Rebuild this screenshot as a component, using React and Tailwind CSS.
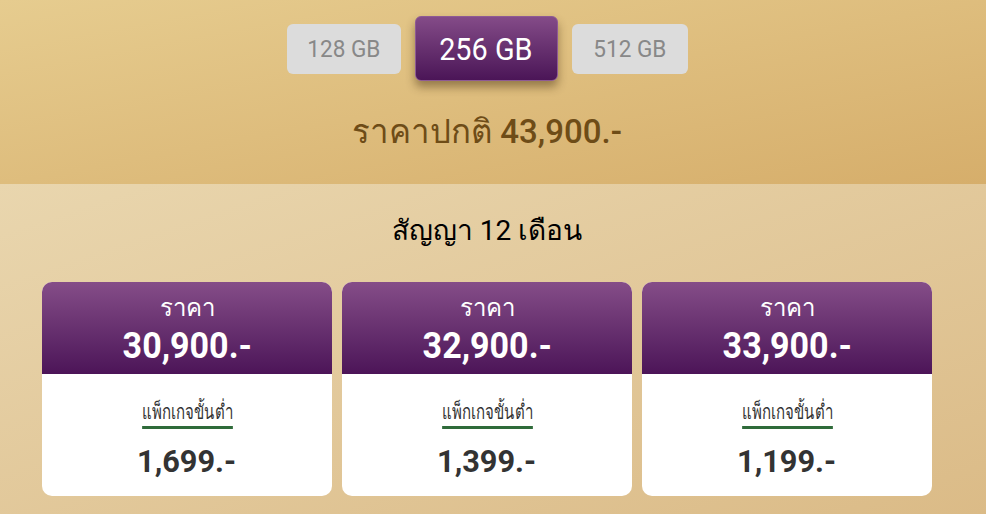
export default function App() {
  const cards = [
    { price: "30,900.-", pkg: "1,699.-" },
    { price: "32,900.-", pkg: "1,399.-" },
    { price: "33,900.-", pkg: "1,199.-" },
  ];
  return (
    <div className="w-[986px] h-[514px] overflow-hidden" style={{ fontFamily: "Roboto, 'Noto Sans', 'DejaVu Sans', sans-serif" }}>
      <div className="h-[184px] bg-gradient-to-br from-[#e6cc8f] to-[#d6ae6b] flex flex-col items-center pr-[12px]">
        <div className="flex items-center gap-[14px] mt-[16px]">
          <div className="w-[114px] h-[50px] rounded-[6px] bg-[#dcdcdc] text-[#888] text-[24px] flex items-center justify-center"><span className="inline-block scale-x-[0.94]">128 GB</span></div>
          <div className="w-[143px] h-[65px] rounded-[6px] bg-gradient-to-b from-[#844b88] to-[#4b1557] border border-[#8e5a94] text-white text-[32px] flex items-center justify-center shadow-[0_6px_10px_rgba(60,40,10,0.45)]"><span className="inline-block scale-x-[0.9]">256 GB</span></div>
          <div className="w-[116px] h-[50px] rounded-[6px] bg-[#dcdcdc] text-[#888] text-[24px] flex items-center justify-center"><span className="inline-block scale-x-[0.94]">512 GB</span></div>
        </div>
        <div className="mt-[34px] text-[33px] font-medium text-[#6e4c17] leading-none">ราคาปกติ 43,900.-</div>
      </div>
      <div className="h-[330px] bg-gradient-to-br from-[#e9d6ae] to-[#dbbb87] flex flex-col items-center pr-[12px]">
        <div className="mt-[33px] text-[28px] text-black leading-none">สัญญา 12 เดือน</div>
        <div className="mt-[37px] flex gap-[10px]">
          {cards.map((c, i) => (
            <div key={i} className="w-[290px] h-[214px] rounded-[10px] overflow-hidden bg-white flex flex-col">
              <div className="h-[92px] bg-gradient-to-b from-[#854d88] to-[#4c1458] flex flex-col items-center text-white">
                <div className="mt-[14px] text-[24px] leading-none">ราคา</div>
                <div className="mt-[7px] text-[37px] font-bold leading-none"><span className="inline-block scale-x-[0.92]">{c.price}</span></div>
              </div>
              <div className="flex flex-col items-center">
                <div className="mt-[28px] text-[20px] text-[#333] leading-none border-b-[3px] border-[#2f6b3a] pb-[4px] scale-x-[0.75]">แพ็กเกจขั้นต่ำ</div>
                <div className="mt-[16px] text-[32px] font-bold text-[#333] leading-none"><span className="inline-block scale-x-[0.96]">{c.pkg}</span></div>
              </div>
            </div>
          ))}
        </div>
      </div>
    </div>
  );
}
